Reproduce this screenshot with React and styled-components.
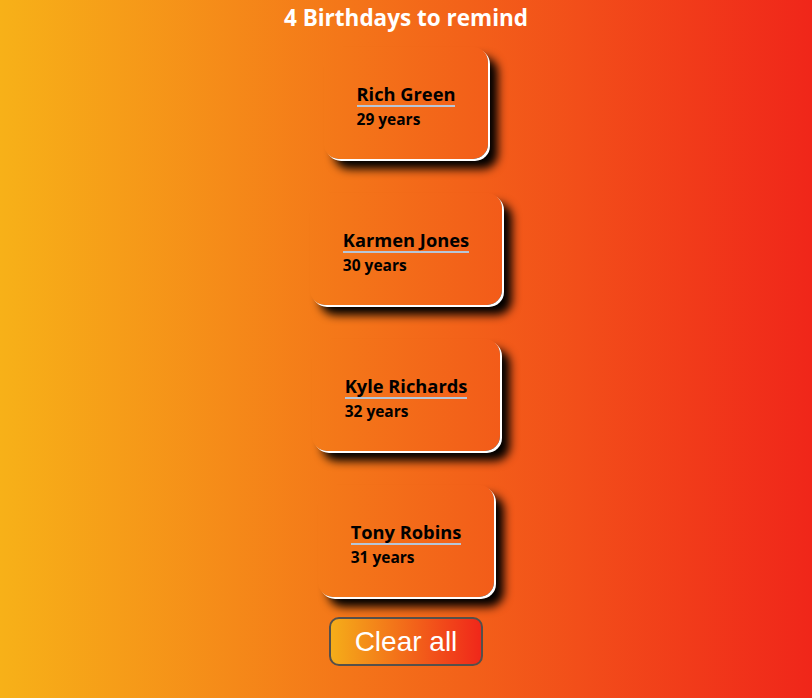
import React from 'react';
import styled, { createGlobalStyle } from 'styled-components';

const GlobalStyle = createGlobalStyle`
  html, body {
    margin: 0;
    min-height: 100%;
  }
  body {
    background: linear-gradient(to right, #f7b118, #f0261a);
    font-family: "Open Sans", "DejaVu Sans", sans-serif;
    min-height: 698px;
  }
`;

const Page = styled.main`
  display: flex;
  flex-direction: column;
  align-items: center;
  padding-top: 4px;
`;

const Heading = styled.h1`
  margin: 0 0 15px;
  color: #fff;
  font-size: 22.5px;
  font-weight: 700;
  line-height: 28px;
`;

const List = styled.ul`
  list-style: none;
  margin: 0;
  padding: 0;
  display: flex;
  flex-direction: column;
  align-items: center;
  gap: 34px;
`;

const Card = styled.li`
  box-sizing: border-box;
  height: 112px;
  padding: 35px 33px 0;
  border-radius: 15px;
  box-shadow: 2px 2px 0 #fff, 10px 10px 10px #000;
`;

const Name = styled.h2`
  margin: 0;
  display: inline-block;
  font-size: 18.3px;
  font-weight: 700;
  line-height: 23px;
  color: #000;
  border-bottom: 2px solid #b7c6d8;
`;

const Age = styled.p`
  margin: 2px 0 0;
  font-size: 15.5px;
  font-weight: 700;
  line-height: 20px;
  color: #000;
`;

const ClearButton = styled.button`
  margin-top: 20px;
  width: 154px;
  height: 49px;
  border: 2px solid #55504a;
  border-radius: 10px;
  background: linear-gradient(to right, #f5ad19, #f0271a);
  color: #fff;
  font-family: "Liberation Sans", Arial, sans-serif;
  font-size: 28px;
  cursor: pointer;
`;

const people = [
  { name: 'Rich Green', age: 29 },
  { name: 'Karmen Jones', age: 30 },
  { name: 'Kyle Richards', age: 32 },
  { name: 'Tony Robins', age: 31 },
];

export default function App() {
  return (
    <>
      <GlobalStyle />
      <Page>
        <Heading>{people.length} Birthdays to remind</Heading>
        <List>
          {people.map((p) => (
            <Card key={p.name}>
              <Name>{p.name}</Name>
              <Age>{p.age} years</Age>
            </Card>
          ))}
        </List>
        <ClearButton>Clear all</ClearButton>
      </Page>
    </>
  );
}
